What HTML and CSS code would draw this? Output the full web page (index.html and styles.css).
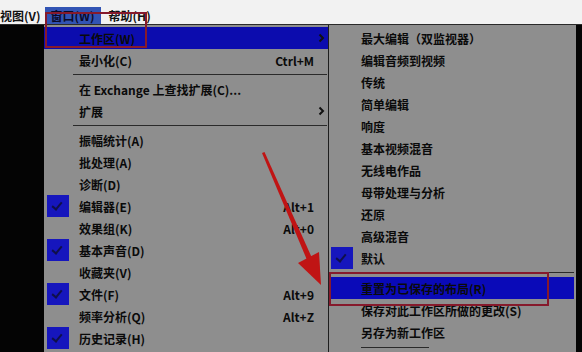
FILE: index.html
```html
<!DOCTYPE html>
<html lang="zh">
<head>
<meta charset="utf-8">
<link rel="stylesheet" href="styles.css">
</head>
<body>
<div class="screen">
  <div class="topbar">
    <span class="top-item first">视图(V)</span>
    <span class="top-item active">窗口(W)</span>
    <span class="top-item">帮助(H)</span>
  </div>
  <div class="workspace">
    <div class="black-left"></div>
    <div class="menu main">
      <div class="row hl"><span class="gut"></span><span class="label">工作区(W)</span><span class="arrow"><svg width="7" height="10" viewBox="0 0 7 10"><path d="M1.5 1.5 L5 5 L1.5 8.5" fill="none" stroke="#111" stroke-width="2"/></svg></span></div>
      <div class="row"><span class="gut"></span><span class="label">最小化(C)</span><span class="key">Ctrl+M</span><span class="arrow"></span></div>
      <div class="sep"></div>
      <div class="row"><span class="gut"></span><span class="label">在 Exchange 上查找扩展(C)...</span><span class="arrow"></span></div>
      <div class="row"><span class="gut"></span><span class="label">扩展</span><span class="arrow"><svg width="7" height="10" viewBox="0 0 7 10"><path d="M1.5 1.5 L5 5 L1.5 8.5" fill="none" stroke="#111" stroke-width="2"/></svg></span></div>
      <div class="sep"></div>
      <div class="row"><span class="gut"></span><span class="label">振幅统计(A)</span><span class="arrow"></span></div>
      <div class="row"><span class="gut"></span><span class="label">批处理(A)</span><span class="arrow"></span></div>
      <div class="row"><span class="gut"></span><span class="label">诊断(D)</span><span class="arrow"></span></div>
      <div class="row"><span class="gut"><span class="check"></span></span><span class="label">编辑器(E)</span><span class="key">Alt+1</span><span class="arrow"></span></div>
      <div class="row"><span class="gut"></span><span class="label">效果组(K)</span><span class="key">Alt+0</span><span class="arrow"></span></div>
      <div class="row"><span class="gut"><span class="check"></span></span><span class="label">基本声音(D)</span><span class="arrow"></span></div>
      <div class="row"><span class="gut"></span><span class="label">收藏夹(V)</span><span class="arrow"></span></div>
      <div class="row"><span class="gut"><span class="check"></span></span><span class="label">文件(F)</span><span class="key">Alt+9</span><span class="arrow"></span></div>
      <div class="row"><span class="gut"></span><span class="label">频率分析(Q)</span><span class="key">Alt+Z</span><span class="arrow"></span></div>
      <div class="row"><span class="gut"><span class="check"></span></span><span class="label">历史记录(H)</span><span class="arrow"></span></div>
    </div>
    <div class="menu sub">
      <div class="row"><span class="gut"></span><span class="label">最大编辑（双监视器）</span></div>
      <div class="row"><span class="gut"></span><span class="label">编辑音频到视频</span></div>
      <div class="row"><span class="gut"></span><span class="label">传统</span></div>
      <div class="row"><span class="gut"></span><span class="label">简单编辑</span></div>
      <div class="row"><span class="gut"></span><span class="label">响度</span></div>
      <div class="row"><span class="gut"></span><span class="label">基本视频混音</span></div>
      <div class="row"><span class="gut"></span><span class="label">无线电作品</span></div>
      <div class="row"><span class="gut"></span><span class="label">母带处理与分析</span></div>
      <div class="row"><span class="gut"></span><span class="label">还原</span></div>
      <div class="row"><span class="gut"></span><span class="label">高级混音</span></div>
      <div class="row"><span class="gut"><span class="check"></span></span><span class="label">默认</span></div>
      <div class="sep full"></div>
      <div class="row hl"><span class="gut"></span><span class="label">重置为已保存的布局(R)</span></div>
      <div class="row"><span class="gut"></span><span class="label">保存对此工作区所做的更改(S)</span></div>
      <div class="row"><span class="gut"></span><span class="label">另存为新工作区</span></div>
      <div class="sep short"></div>
    </div>
    <div class="black-right"></div>
  </div>

  <div class="redbox box1"></div>
  <div class="redbox box2"></div>
  <svg class="arrow-anno" width="582" height="352" viewBox="0 0 582 352">
    <polygon points="262,153 264.5,152 312,258 307,260" fill="#c01414"/>
    <polygon points="321,285 298,263 319,252" fill="#c01414"/>
  </svg>
</div>
</body>
</html>
```
FILE: styles.css
```css
html, body {
  margin: 0;
  padding: 0;
  background: #000;
}
.screen {
  position: relative;
  width: 582px;
  height: 352px;
  overflow: hidden;
  background: #050505;
  font-family: "Noto Sans CJK SC", "Liberation Sans", sans-serif;
  font-size: 12px;
  font-weight: 700;
  color: #0a0a0a;
}
.topbar {
  height: 24px;
  background: #f2f2f2;
  border-bottom: 1px solid #2a2a2a;
  display: flex;
  align-items: flex-end;
}
.top-item {
  height: 17px;
  line-height: 17px;
  padding: 0 6px;
  color: #111;
}
.top-item.first {
  margin-left: -6px;
  padding-right: 4px;
}
.top-item.active {
  background: #3254b4;
  color: #0a0a2a;
  padding: 0 6px 0 6px;
  margin-right: 2px;
}
.workspace {
  display: flex;
  height: 327px;
}
.black-left {
  width: 44px;
  background: #040404;
}
.menu {
  background: #8e8e8e;
  padding-top: 2px;
  box-sizing: border-box;
}
.main {
  width: 285px;
  border-right: 1px solid #1e1e1e;
}
.sub {
  width: 247px;
}
.black-right {
  flex: 1;
  background: #050505;
}
.row {
  display: flex;
  align-items: center;
  height: 22px;
  white-space: nowrap;
}
.row.hl {
  background: #0c0cae;
}
.sub .row.hl {
  margin: 0 2px;
  background: #0a0ab8;
}
.gut {
  width: 35px;
  height: 22px;
  flex: none;
  display: flex;
  align-items: center;
  padding-left: 3px;
  box-sizing: border-box;
}
.sub .gut {
  width: 32px;
  padding-left: 2px;
}
.sub .row.hl .gut {
  width: 30px;
}
.check {
  width: 22px;
  height: 22px;
  background: #1616bd;
  position: relative;
}
.check::after {
  content: "";
  position: absolute;
  left: 7px;
  top: 5px;
  width: 4px;
  height: 8px;
  border-right: 2px solid #10104a;
  border-bottom: 2px solid #10104a;
  transform: rotate(40deg);
}
.label {
  flex: 1;
}
.key {
  flex: none;
  text-align: right;
}
.arrow {
  width: 14px;
  flex: none;
  display: flex;
  align-items: center;
  justify-content: center;
}
.sep {
  height: 7px;
  position: relative;
}
.sep::after {
  content: "";
  position: absolute;
  left: 29px;
  right: 1px;
  top: 3px;
  height: 1px;
  background: #2a2a2a;
}
.sep.full {
  height: 8px;
}
.sep.full::after {
  left: 2px;
  right: 2px;
}
.sep.short::after {
  left: 32px;
  right: auto;
  width: 68px;
  top: 4px;
}
.redbox {
  position: absolute;
  border: 2px solid #861a2c;
  box-sizing: border-box;
}
.box1 {
  left: 45px;
  top: 12px;
  width: 102px;
  height: 36px;
}
.box2 {
  left: 329px;
  top: 272px;
  width: 220px;
  height: 34px;
}
.arrow-anno {
  position: absolute;
  left: 0;
  top: 0;
}
```
